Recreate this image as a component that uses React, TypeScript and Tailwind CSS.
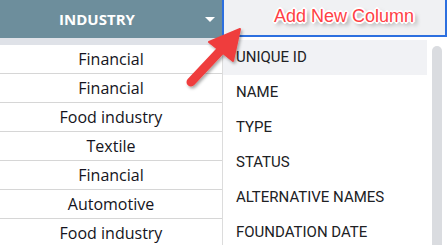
import React from "react";

const rows = ["Financial", "Financial", "Food industry", "Textile", "Financial", "Automotive", "Food industry"];
const items = ["UNIQUE ID", "NAME", "TYPE", "STATUS", "ALTERNATIVE NAMES", "FOUNDATION DATE"];

export default function App() {
  return (
    <div className="relative w-[447px] h-[245px] overflow-hidden bg-white flex">
      {/* Left table column */}
      <div className="w-[222px] flex flex-col shrink-0">
        <div className="h-[38px] bg-[#6d8e9c] flex items-center shrink-0">
          <span className="flex-1 text-center text-white font-bold text-[15px] leading-none font-['Open_Sans',sans-serif]">
            INDUSTRY
          </span>
          <div className="w-[28px] flex items-center">
            <svg width="10" height="5" viewBox="0 0 10 5" className="ml-[11px]">
              <polygon points="0,0 10,0 5,5" fill="#ffffff" />
            </svg>
          </div>
        </div>
        <div className="h-[7px] bg-[#dfe2e8] shrink-0" />
        {rows.map((r, i) => (
          <div
            key={i}
            className="h-[29px] shrink-0 border-b border-[#d6d6d6] flex items-center justify-center text-[16px] text-[#141420] font-['Open_Sans',sans-serif]"
          >
            {r}
          </div>
        ))}
      </div>

      {/* Right: new column input + dropdown */}
      <div className="flex-1 flex flex-col">
        <div className="h-[37px] shrink-0 bg-[#f0f1f3] border-x-2 border-b-2 border-[#2c6fdf] pl-[50px] pt-[4px]">
          <span className="text-[18px] leading-[24px] text-[#ff3f45] font-['Liberation_Sans',Arial,sans-serif] [-webkit-text-stroke:0.5px_#ff3f45] [paint-order:stroke_fill] [text-shadow:-1px_-1px_0_#fff,1px_-1px_0_#fff,-1px_1px_0_#fff,1px_1px_0_#fff,0_-2px_0_#fff,0_2px_0_#fff,-2px_0_0_#fff,2px_0_0_#fff,3px_3px_4px_rgba(0,0,0,0.5)]">
            Add New Column
          </span>
        </div>
        <div className="mt-[3px] flex-1 flex border-l border-[#dcdcdc]">
          <div className="w-[204px] flex flex-col">
            {items.map((it, i) => (
              <div
                key={it}
                className={`h-[35px] shrink-0 flex items-center pl-[13px] text-[15px] text-[#202124] font-['Roboto',sans-serif] ${
                  i === 0 ? "bg-[#f1f2f5]" : ""
                }`}
              >
                {it}
              </div>
            ))}
          </div>
          <div className="ml-[5px] w-[10px] mt-[6px] rounded-t-full bg-[#dadce0]" />
        </div>
      </div>

      {/* Annotation arrow */}
      <svg className="absolute left-0 top-0 pointer-events-none" width="447" height="245" viewBox="0 0 447 245">
        <defs>
          <filter id="sh" x="-50%" y="-50%" width="200%" height="200%">
            <feDropShadow dx="1.5" dy="2" stdDeviation="1.5" floodColor="#000" floodOpacity="0.35" />
          </filter>
        </defs>
        <g filter="url(#sh)" fill="#ef3e3e" stroke="#ef3e3e">
          <line x1="191" y1="82" x2="222" y2="49" strokeWidth="9" strokeLinecap="round" />
          <polygon points="240,29 209,42 233,61" strokeWidth="2" strokeLinejoin="round" />
        </g>
      </svg>
    </div>
  );
}
